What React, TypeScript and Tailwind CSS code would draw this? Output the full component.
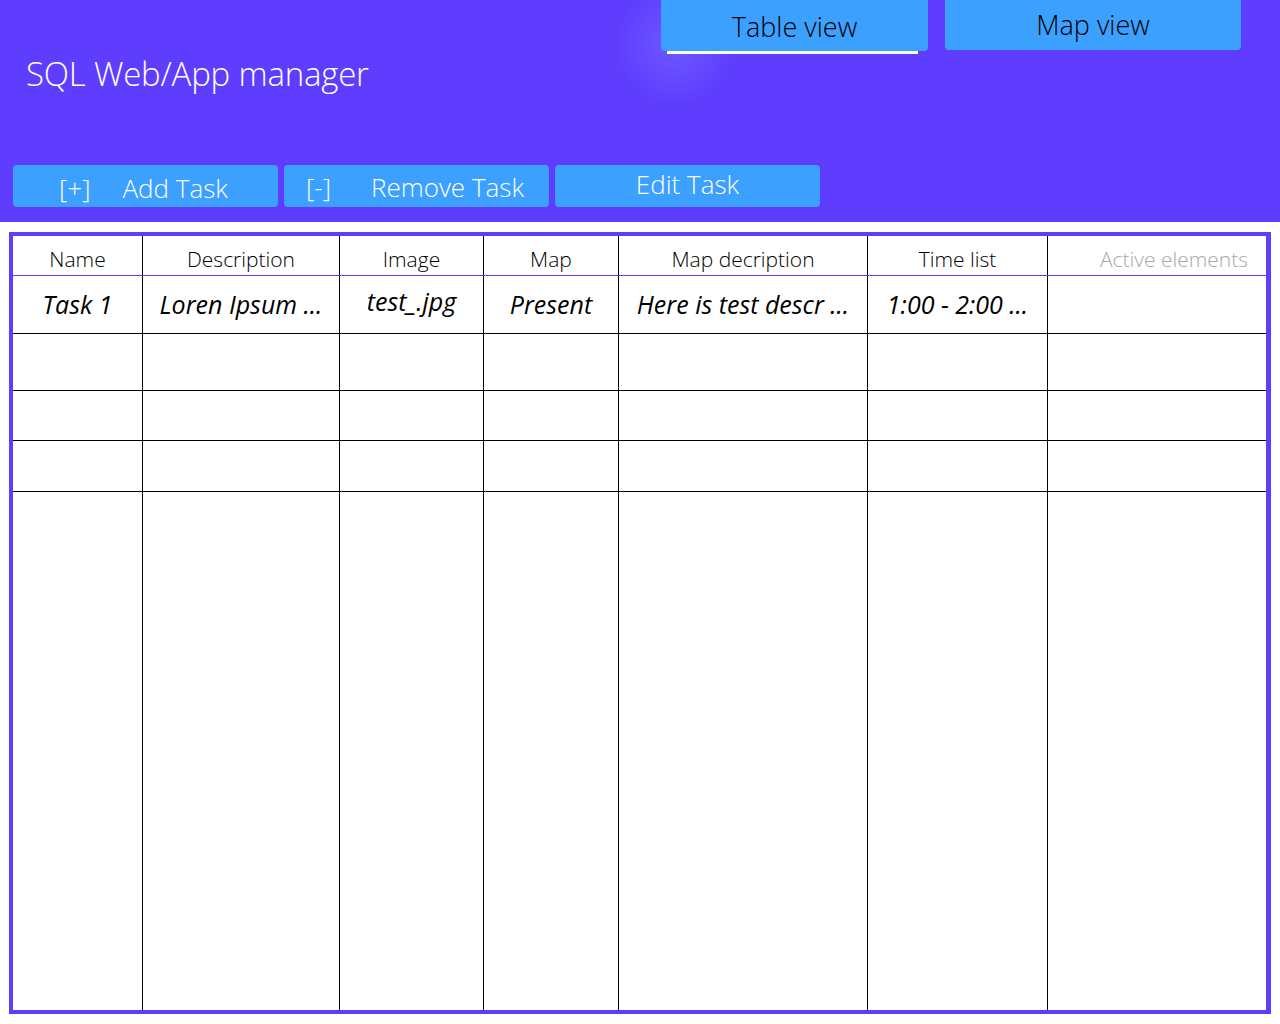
import React from 'react';

const FONT = { fontFamily: '"Segoe UI", "Open Sans", "Noto Sans", sans-serif' };

const columns = [
  { title: 'Name', width: 'w-[130px]' },
  { title: 'Description', width: 'w-[197px]' },
  { title: 'Image', width: 'w-[144px]' },
  { title: 'Map', width: 'w-[135px]' },
  { title: 'Map decription', width: 'w-[249px]' },
  { title: 'Time list', width: 'w-[180px]' },
  { title: 'Active elements', width: 'flex-1' },
];

const firstRow = ['Task 1', 'Loren Ipsum ...', 'test_.jpg', 'Present', 'Here is test descr ...', '1:00 - 2:00 ...', ''];

const emptyRows = ['h-[57px]', 'h-[50px]', 'h-[51px]'];

const TableRow: React.FC<{ cells: string[]; height: string; border: string; header?: boolean }> = ({ cells, height, border, header }) => (
  <div className={`flex ${height} ${border}`}>
    {columns.map((col, i) => {
      const last = i === columns.length - 1;
      let text = 'text-black';
      if (header && last) text = 'text-[#a8a8a8] pl-[34px]';
      // the image name sits a little higher than its neighbours
      if (!header && i === 2) text = 'text-black pb-[5px]';
      return (
        <div
          key={i}
          className={`${col.width} ${last ? '' : 'border-r border-black'} flex items-center justify-center ${text} ${
            header ? 'text-[21px] font-light pt-[9px]' : 'text-[25px] italic'
          }`}
        >
          {cells[i]}
        </div>
      );
    })}
  </div>
);

export default function App() {
  return (
    <div className="w-[1280px] h-[1024px] bg-white overflow-hidden" style={FONT}>
      {/* header */}
      <div className="relative h-[222px] bg-[#5f3dff]">
        <div className="absolute left-[610px] top-[-10px] w-[130px] h-[110px] rounded-full bg-[radial-gradient(circle,rgba(120,110,255,0.55)_0%,rgba(95,61,255,0)_70%)]" />
        <div className="relative flex h-[90px]">
          <div className="w-[661px] pl-[26px] pt-[57px]">
            <h1 className="text-[33px] font-light text-white leading-none tracking-[-0.2px]">SQL Web/App manager</h1>
          </div>
          <div className="flex flex-col">
            <div className="w-[267px] h-[51px] bg-[#3ca0ff] rounded-b-[4px] flex items-center justify-center text-[27px] font-light text-black pt-[3px]">
              Table view
            </div>
            <div className="ml-[6px] w-[251px] h-[3px] bg-white" />
          </div>
          <div className="ml-[17px] w-[296px] h-[50px] bg-[#3ca0ff] rounded-b-[4px] flex items-center justify-center text-[27px] font-light text-black">
            Map view
          </div>
        </div>
        <div className="relative flex gap-[6px] pl-[13px] mt-[75px]">
          <button className="w-[265px] h-[42px] bg-[#3ca0ff] rounded-[4px] flex items-center text-white text-[26px] font-light pt-[4px]">
            <span className="ml-[46px]">[+]</span>
            <span className="ml-[32px]">Add Task</span>
          </button>
          <button className="w-[265px] h-[42px] bg-[#3ca0ff] rounded-[4px] flex items-center text-white text-[26px] font-light pt-[2px]">
            <span className="ml-[22px]">[-]</span>
            <span className="ml-[40px]">Remove Task</span>
          </button>
          <button className="w-[265px] h-[42px] bg-[#3ca0ff] rounded-[4px] flex items-center justify-center text-white text-[26px] font-light pb-[4px]">
            Edit Task
          </button>
        </div>
      </div>

      {/* table */}
      <div className="ml-[9px] mt-[10px] w-[1262px] h-[782px] border-[4px] border-[#5f3dff] border-r-[5px] flex flex-col">
        <TableRow cells={columns.map((c) => c.title)} height="h-[40px]" border="border-b border-[#5f3dff]" header />
        <TableRow cells={firstRow} height="h-[58px]" border="border-b border-black" />
        {emptyRows.map((h, i) => (
          <TableRow key={i} cells={[]} height={h} border="border-b border-black" />
        ))}
        <div className="flex flex-1">
          {columns.map((col, i) => (
            <div key={i} className={`${col.width} ${i === columns.length - 1 ? '' : 'border-r border-black'}`} />
          ))}
        </div>
      </div>
    </div>
  );
}
